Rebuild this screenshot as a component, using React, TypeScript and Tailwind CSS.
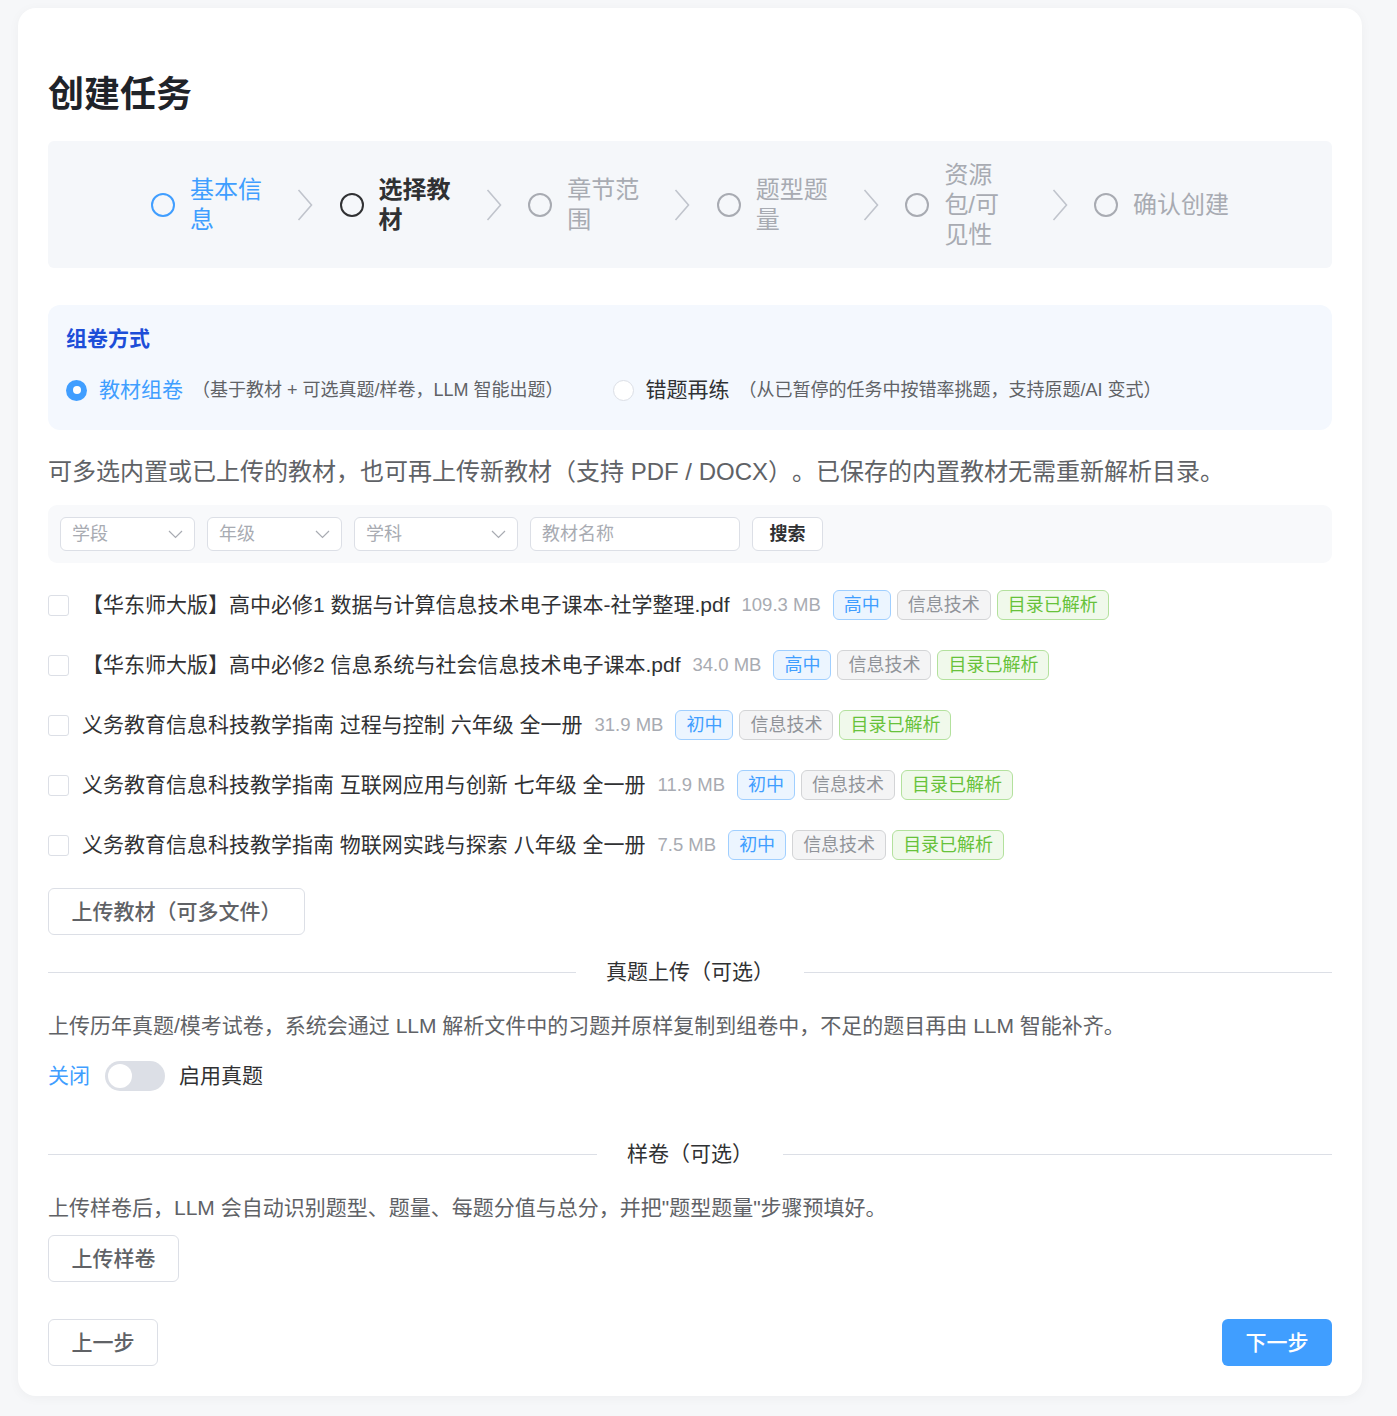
import React from "react";

const FONT = { fontFamily: '"Liberation Sans", "Noto Sans CJK SC", sans-serif' };

type StepState = "done" | "active" | "wait";
const steps: { label: string; state: StepState }[] = [
  { label: "基本信息", state: "done" },
  { label: "选择教材", state: "active" },
  { label: "章节范围", state: "wait" },
  { label: "题型题量", state: "wait" },
  { label: "资源包/可见性", state: "wait" },
  { label: "确认创建", state: "wait" },
];

function StepIcon({ state }: { state: StepState }) {
  const cls =
    state === "done"
      ? "border-[#409eff]"
      : state === "active"
      ? "border-[#303133]"
      : "border-[#a8abb2]";
  return <div className={`w-[24px] h-[24px] shrink-0 rounded-full border-[2.5px] ${cls}`} />;
}

function Chevron() {
  return (
    <svg width="16" height="32" viewBox="0 0 16 32" fill="none">
      <polyline points="1.5,1 14.5,16 1.5,31" stroke="#c0c4cc" strokeWidth="1.6" fill="none" />
    </svg>
  );
}

function Steps() {
  return (
    <div className="bg-[#f5f7fa] rounded-[6px] px-[103px] py-[18.5px] flex items-center">
      {steps.map((s, i) => {
        const last = i === steps.length - 1;
        const color =
          s.state === "done"
            ? "text-[#409eff]"
            : s.state === "active"
            ? "text-[#303133] font-bold"
            : "text-[#a8abb2]";
        return (
          <div key={s.label} className={`flex items-center ${last ? "" : "w-[188.6px] shrink-0"}`}>
            <StepIcon state={s.state} />
            <div className={`pl-[15px] flex items-center ${last ? "" : "flex-1"}`}>
              <div
                className={`text-[24px] leading-[30px] ${color} ${last ? "whitespace-nowrap" : "w-[75px] break-all"}`}
              >
                {s.label}
              </div>
              {!last && (
                <div className="flex-1 flex justify-center pl-[6px]">
                  <Chevron />
                </div>
              )}
            </div>
          </div>
        );
      })}
    </div>
  );
}

function SelectBox({ label, w }: { label: string; w: string }) {
  return (
    <div className={`${w} h-[34px] bg-white border border-[#dcdfe6] rounded-[6px] px-[11px] flex items-center justify-between`}>
      <span className="text-[18px] text-[#a8abb2]">{label}</span>
      <svg width="15" height="9" viewBox="0 0 15 9" fill="none">
        <polyline points="1,1 7.5,7.5 14,1" stroke="#a8abb2" strokeWidth="1.2" fill="none" />
      </svg>
    </div>
  );
}

const books = [
  { name: "【华东师大版】高中必修1 数据与计算信息技术电子课本-社学整理.pdf", size: "109.3 MB", level: "高中" },
  { name: "【华东师大版】高中必修2 信息系统与社会信息技术电子课本.pdf", size: "34.0 MB", level: "高中" },
  { name: "义务教育信息科技教学指南 过程与控制 六年级 全一册", size: "31.9 MB", level: "初中" },
  { name: "义务教育信息科技教学指南 互联网应用与创新 七年级 全一册", size: "11.9 MB", level: "初中" },
  { name: "义务教育信息科技教学指南 物联网实践与探索 八年级 全一册", size: "7.5 MB", level: "初中" },
];

function Tag({ children, kind }: { children: React.ReactNode; kind: "blue" | "gray" | "green" }) {
  const cls =
    kind === "blue"
      ? "bg-[#ecf5ff] border-[#a0cfff] text-[#409eff]"
      : kind === "gray"
      ? "bg-[#f4f4f5] border-[#d3d4d6] text-[#909399]"
      : "bg-[#f0f9eb] border-[#b3e19d] text-[#67c23a]";
  return (
    <span className={`h-[30px] px-[10px] border rounded-[6px] text-[18px] leading-[28px] inline-flex items-center ${cls}`}>
      {children}
    </span>
  );
}

function Divider({ text }: { text: string }) {
  return (
    <div className="flex items-center h-[30px]">
      <div className="flex-1 h-px bg-[#dcdfe6]" />
      <div className="px-[30px] text-[21px] text-[#303133] leading-[30px]">{text}</div>
      <div className="flex-1 h-px bg-[#dcdfe6]" />
    </div>
  );
}

function Btn({ children }: { children: React.ReactNode }) {
  return (
    <div className="inline-flex h-[47px] items-center px-[22.5px] border border-[#dcdfe6] rounded-[6px] bg-white text-[21px] font-medium text-[#606266]">
      {children}
    </div>
  );
}

export default function App() {
  return (
    <div className="min-h-[1416px] bg-[#f6f7f9] pt-[8px] pb-[20px] [text-spacing-trim:space-all]" style={FONT}>
      <div className="ml-[18px] w-[1344px] bg-white rounded-[18px] shadow-[0_2px_12px_rgba(0,0,0,0.04)] px-[30px] pt-[30px] pb-[30px] flex flex-col">
        <h1 className="mt-[30px] text-[36px] leading-[54px] font-bold text-[#1f2329]">创建任务</h1>
        <div className="mt-[19px]">
          <Steps />
        </div>

        <div className="mt-[37px] bg-[#f4f8fe] rounded-[12px] px-[18px] pt-[20px] pb-[26px]">
          <div className="text-[21px] leading-[28px] font-bold text-[#1d4ed8]">组卷方式</div>
          <div className="mt-[23px] flex items-center h-[28px]">
            <div className="w-[21px] h-[21px] rounded-full bg-[#409eff] flex items-center justify-center">
              <div className="w-[8px] h-[8px] rounded-full bg-white" />
            </div>
            <span className="ml-[12px] text-[21px] text-[#409eff]">教材组卷</span>
            <span className="ml-[9px] text-[18px] text-[#606266]">（基于教材 + 可选真题/样卷，LLM 智能出题）</span>
            <div className="ml-[49px] w-[21px] h-[21px] rounded-full bg-white border border-[#dcdfe6]" />
            <span className="ml-[12px] text-[21px] text-[#303133]">错题再练</span>
            <span className="ml-[9px] text-[18px] text-[#606266]">（从已暂停的任务中按错率挑题，支持原题/AI 变式）</span>
          </div>
        </div>

        <p className="mt-[24px] text-[24px] leading-[36px] text-[#606266]">
          可多选内置或已上传的教材，也可再上传新教材（支持 PDF / DOCX）。已保存的内置教材无需重新解析目录。
        </p>

        <div className="mt-[15px] bg-[#f8f9fb] rounded-[9px] p-[12px] flex items-center gap-[12px]">
          <SelectBox label="学段" w="w-[135px]" />
          <SelectBox label="年级" w="w-[135px]" />
          <SelectBox label="学科" w="w-[164px]" />
          <div className="w-[210px] h-[34px] bg-white border border-[#dcdfe6] rounded-[6px] px-[11px] flex items-center">
            <span className="text-[18px] text-[#a8abb2]">教材名称</span>
          </div>
          <div className="w-[71px] h-[34px] bg-white border border-[#dcdfe6] rounded-[6px] flex items-center justify-center text-[18px] font-bold text-[#303133]">
            搜索
          </div>
        </div>

        <div className="mt-[12px] flex flex-col">
          {books.map((b) => (
            <div key={b.name} className="h-[60px] flex items-center">
              <div className="w-[21px] h-[21px] rounded-[3px] border border-[#dcdfe6] bg-white shrink-0" />
              <span className="ml-[13px] text-[21px] text-[#303133] whitespace-nowrap">{b.name}</span>
              <span className="ml-[12px] text-[18.5px] text-[#a8abb2] whitespace-nowrap">{b.size}</span>
              <div className="ml-[12px] flex items-center gap-[6px]">
                <Tag kind="blue">{b.level}</Tag>
                <Tag kind="gray">信息技术</Tag>
                <Tag kind="green">目录已解析</Tag>
              </div>
            </div>
          ))}
        </div>

        <div className="mt-[13px]">
          <Btn>上传教材（可多文件）</Btn>
        </div>

        <div className="mt-[22px]">
          <Divider text="真题上传（可选）" />
        </div>
        <p className="mt-[21px] text-[21px] leading-[36px] text-[#606266]">
          上传历年真题/模考试卷，系统会通过 LLM 解析文件中的习题并原样复制到组卷中，不足的题目再由 LLM 智能补齐。
        </p>
        <div className="mt-[14px] h-[36px] flex items-center">
          <span className="text-[21px] text-[#409eff]">关闭</span>
          <div className="ml-[15px] w-[60px] h-[30px] rounded-full bg-[#dcdfe6] flex items-center px-[3px]">
            <div className="w-[24px] h-[24px] rounded-full bg-white" />
          </div>
          <span className="ml-[14px] text-[21px] text-[#303133]">启用真题</span>
        </div>

        <div className="mt-[45px]">
          <Divider text="样卷（可选）" />
        </div>
        <p className="mt-[21px] text-[21px] leading-[36px] text-[#606266]">
          上传样卷后，LLM 会自动识别题型、题量、每题分值与总分，并把"题型题量"步骤预填好。
        </p>
        <div className="mt-[9px]">
          <Btn>上传样卷</Btn>
        </div>

        <div className="mt-[37px] flex items-center justify-between">
          <Btn>上一步</Btn>
          <div className="inline-flex h-[47px] w-[110px] items-center justify-center rounded-[6px] bg-[#409eff] text-[21px] font-medium text-white">
            下一步
          </div>
        </div>
      </div>
    </div>
  );
}
